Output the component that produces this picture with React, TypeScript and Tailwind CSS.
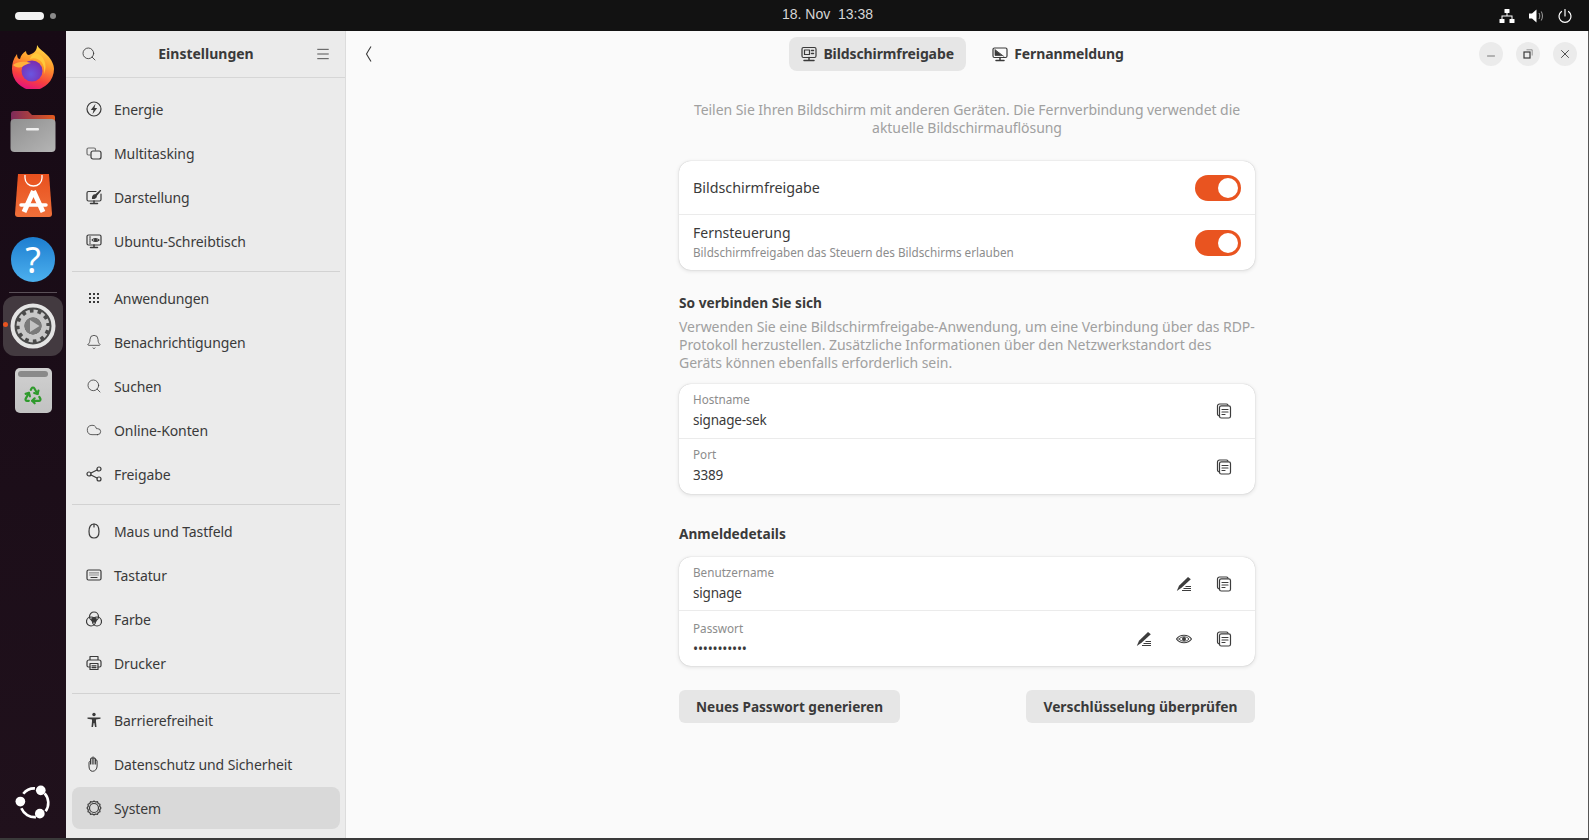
import React from 'react';
import { Search, Menu, Minus, X, Bell, Cloud, Recycle } from 'lucide-react';

const font = { fontFamily: '"Noto Sans", sans-serif' };

function Ico({ children, size = 16 }: { children: React.ReactNode; size?: number }) {
  return (
    <svg width={size} height={size} viewBox="0 0 16 16" fill="none" stroke="currentColor" strokeWidth="1.2" strokeLinecap="round" strokeLinejoin="round">
      {children}
    </svg>
  );
}

const EnergyIcon = () => (
  <Ico>
    <circle cx="8" cy="8" r="7" />
    <path d="M9.500 2.800 4.800 9H7.500L6.500 13.200 11.200 7H8.500z" fill="currentColor" stroke="none" />
  </Ico>
);
const MultitaskIcon = () => (
  <Ico>
    <path d="M4 10H2.500A1.500 1.500 0 0 1 1 8.500V4.500A1.500 1.500 0 0 1 2.500 3H8A1.500 1.500 0 0 1 9.500 4.500V5" strokeOpacity="0.7" />
    <rect x="5" y="6" width="10" height="8" rx="2" />
  </Ico>
);
const AppearanceIcon = () => (
  <Ico>
    <path d="M10 2.500H2.500A1.500 1.500 0 0 0 1 4v6.500A1.500 1.500 0 0 0 2.500 12h11a1.500 1.500 0 0 0 1.500-1.500V5" />
    <path d="M14.500 1.500 9.500 6c-1.500-.500-3 .500-3 3.500 2.500 0 4-1 3.800-2.800z" fill="currentColor" />
    <path d="M8 12v2M4.500 14.500h7" strokeWidth="1.500" />
  </Ico>
);
const DesktopIcon = () => (
  <Ico>
    <rect x="1" y="2" width="14" height="10" rx="1.500" />
    <path d="M3.500 4h1M3.500 6h1M3.500 8h1M3.500 10h1" />
    <path d="M6 7c1.500-2 5-2 7 0-2 2-5.500 2-7 0z" />
    <circle cx="9.500" cy="7" r="1" fill="currentColor" />
    <path d="M8 12v2M4.500 14.500h7" strokeWidth="1.500" />
  </Ico>
);
const AppsIcon = () => (
  <svg width="16" height="16" viewBox="0 0 16 16" fill="currentColor">
    {[3, 7, 11].flatMap((y) => [3, 7, 11].map((x) => <rect key={`${x}-${y}`} x={x} y={y} width="2" height="2" />))}
  </svg>
);
const ShareIcon = () => (
  <Ico>
    <circle cx="3" cy="8" r="2" />
    <circle cx="13" cy="3" r="2" />
    <circle cx="13" cy="13" r="2" />
    <path d="m5 7 6-3M5 9l6 3" />
  </Ico>
);
const MouseIcon = () => (
  <Ico>
    <path d="M8 1c3.500 0 5 3 5 7.500S11 15 8 15s-5-2-5-6.500S4.500 1 8 1z" />
    <path d="M8 1v3" />
  </Ico>
);
const KeyboardIcon = () => (
  <Ico>
    <rect x="1" y="3" width="14" height="10" rx="1.500" />
    <path d="M3.500 5.800h9M3.500 8h9" strokeDasharray="1 1" strokeLinecap="butt" />
    <path d="M5 10.500h6" />
  </Ico>
);
const ColorIcon = () => (
  <Ico>
    <circle cx="8" cy="5.500" r="4.500" />
    <circle cx="5" cy="10.500" r="4.500" />
    <circle cx="11" cy="10.500" r="4.500" />
    <circle cx="8" cy="8.800" r="2.300" fill="currentColor" />
  </Ico>
);
const PrinterIcon = () => (
  <Ico>
    <path d="M4 5V1.500h8V5M4 12H2.500A1.500 1.500 0 0 1 1 10.500V7a2 2 0 0 1 2-2h10a2 2 0 0 1 2 2v3.500a1.500 1.500 0 0 1-1.500 1.500H12" />
    <rect x="4" y="8.500" width="8" height="6" />
    <path d="M6 10.800h4M6 12.600h4" />
  </Ico>
);
const AccessIcon = () => (
  <svg width="16" height="16" viewBox="0 0 16 16" fill="currentColor">
    <circle cx="8" cy="2.500" r="1.700" />
    <path d="M1.500 5.500h13v1.300L10 7.500V9.500L10.500 15H9L8.300 11h-.6L7 15H5.500L6 9.500V7.500L1.500 6.800z" />
  </svg>
);
const HandIcon = () => (
  <svg width="16" height="16" viewBox="0 0 16 16" fill="none" stroke="currentColor" strokeWidth="1" strokeLinejoin="round">
    <path d="M3 6.500c0-1.300 1.500-1.300 1.500 0V3c0-1.300 1.700-1.300 1.700 0V1.800c0-1.300 1.700-1.300 1.700 0V3c0-1.300 1.700-1.300 1.700 0v2c0-1.300 1.500-1.300 1.500 0v5c0 3-2 5.300-4.500 5.300S3 13 3 10z" />
    <path d="M4.500 4v4.500M6.200 3v5.500M7.900 2.500v6M9.600 3v5.500" />
  </svg>
);
const SystemIcon = () => (
  <Ico>
    <circle cx="8" cy="8" r="4.500" />
    <path d="M8 1l1.500 1 2-.300.700 1.800 1.800.700-.300 2L15 8l-1.300 1.800.300 2-1.800.700-.700 1.800-2-.300L8 15l-1.500-1-2 .300-.700-1.800-1.800-.700.300-2L1 8l1.300-1.800-.300-2 1.800-.700.700-1.800 2 .300z" />
  </Ico>
);
const ScreenShareIcon = () => (
  <Ico>
    <rect x="1" y="1.500" width="14" height="10" rx="1.500" />
    <rect x="3.500" y="4" width="5" height="4.500" />
    <path d="M10.500 4.500h2M10.500 7.500h2" strokeWidth="1.500" />
    <path d="M8 11.500v2M3 14.500h10" strokeWidth="1.500" />
  </Ico>
);
const RemoteIcon = () => (
  <Ico>
    <rect x="1" y="2" width="14" height="9.500" rx="1.500" />
    <path d="M3 4l9 6.500M3 4v5.500h7z" fill="currentColor" strokeWidth="0.700" />
    <path d="M8 11.500v2M4 14.500h8" strokeWidth="1.500" />
  </Ico>
);
const CopyIcon = () => (
  <Ico>
    <path d="M3.500 13A2 2 0 0 1 1.500 11V3A2 2 0 0 1 3.500 1h6.500A2 2 0 0 1 12 2" />
    <rect x="3.500" y="2.800" width="11" height="12.200" rx="1.800" />
    <path d="M6 6.500h6M6 9h6M6 11.500h3" />
  </Ico>
);
const EditIcon = () => (
  <svg width="16" height="16" viewBox="0 0 16 16" fill="#3d3d3d">
    <path d="M12 1 14.800 3.200 5.500 11.800.800 15 3 9.800z" />
    <path d="M9.500 10h5.500v1.100H9.500zM7.500 12h7.500v1.100H7.500zM6 14h9v1.100H6z" />
  </svg>
);
const RevealIcon = () => (
  <Ico>
    <path d="M.500 8C4 3 12 3 15.500 8 12 13 4 13 .500 8z" />
    <path d="M3 8C5.500 5 10.500 5 13 8 10.500 11 5.500 11 3 8z" strokeWidth="0.900" />
    <circle cx="8" cy="8" r="2" fill="currentColor" stroke="none" />
  </Ico>
);

function Firefox() {
  return (
    <svg width="42" height="44" viewBox="0 0 42 44">
      <defs>
        <linearGradient id="ffa" x1="0.750" y1="0" x2="0.400" y2="1">
          <stop offset="0" stopColor="#ffe14a" />
          <stop offset="0.400" stopColor="#ff9a2b" />
          <stop offset="0.750" stopColor="#f6403f" />
          <stop offset="1" stopColor="#e5127e" />
        </linearGradient>
        <radialGradient id="ffb" cx="0.450" cy="0.650" r="0.650">
          <stop offset="0" stopColor="#6a56e0" />
          <stop offset="1" stopColor="#7a2cb0" />
        </radialGradient>
      </defs>
      <path d="M25 0C27 4 31 6 35 10 40 15 42 20 42 24A21 21 0 0 1 0 24C0 19 1 14 5 9 5 12 6 14 8 14 9 10 11 8 14 6 14 8 15 10 17 10 20 9 23 7 24 5 25 3 25 1 25 0z" fill="url(#ffa)" />
      <circle cx="20" cy="26" r="10.500" fill="url(#ffb)" />
      <path d="M1 20C6 16 13 16 19 18 15 19 12 20 10 22 6 23 3 22 1 20z" fill="#ffb13b" />
      <path d="M18 14C26 11 34 18 32 29 36 20 32 10 24 8 21 9 19 11 18 14z" fill="#ffc93b" />
    </svg>
  );
}

function Folder() {
  return (
    <svg width="46" height="42" viewBox="0 0 46 42">
      <defs>
        <linearGradient id="fo" x1="0" y1="0" x2="1" y2="0">
          <stop offset="0" stopColor="#7d2a5a" />
          <stop offset="1" stopColor="#e35a1e" />
        </linearGradient>
        <linearGradient id="fg" x1="0" y1="0" x2="1" y2="1">
          <stop offset="0" stopColor="#8f8f8f" />
          <stop offset="1" stopColor="#b5b5b5" />
        </linearGradient>
      </defs>
      <path d="M1 3a3 3 0 0 1 3-3h14l4 4h21a2 2 0 0 1 2 2v14H1z" fill="url(#fo)" />
      <rect x="0.500" y="8" width="45" height="33" rx="4" fill="url(#fg)" />
      <rect x="16" y="17" width="13" height="2.500" rx="1" fill="#efefef" />
    </svg>
  );
}

function AppCenter() {
  return (
    <svg width="37" height="43" viewBox="0 0 37 43">
      <defs>
        <linearGradient id="ac" x1="0" y1="0" x2="0" y2="1">
          <stop offset="0" stopColor="#e8501e" />
          <stop offset="1" stopColor="#f0703a" />
        </linearGradient>
      </defs>
      <path d="M3 0h31l3 40a3 3 0 0 1-3 3H3a3 3 0 0 1-3-3z" fill="url(#ac)" />
      <path d="M10 1v3a8.500 8 0 0 0 17 0V1" fill="none" stroke="#fff" strokeWidth="1.300" />
      <path d="M18.500 17 9 38M18.500 17 28 38" stroke="#fff" strokeWidth="5" fill="none" />
      <path d="M6 31h25" stroke="#fff" strokeWidth="3.500" strokeLinecap="round" />
    </svg>
  );
}

function HelpIcon() {
  return (
    <div className="w-[44px] h-[45px] rounded-full bg-gradient-to-b from-[#1c7ed0] to-[#4cb0ee] flex items-center justify-center text-white text-[36px] leading-none" style={font}>
      ?
    </div>
  );
}

function SettingsIcon() {
  return (
    <svg width="46" height="46" viewBox="0 0 46 46">
      <circle cx="23" cy="23" r="20.500" fill="#4a4a4a" stroke="#e4e4e4" strokeWidth="4" />
      <g fill="none" stroke="#c8c8c8">
        <circle cx="23" cy="23" r="11" strokeWidth="5" />
        <circle cx="23" cy="23" r="14.500" strokeWidth="4" strokeDasharray="4 3.600" />
      </g>
      <circle cx="23" cy="23" r="8.500" fill="#7a7a7a" />
      <path d="M20 17v12l9.500-6z" fill="#c4c4c4" />
    </svg>
  );
}

function TrashIcon() {
  return (
    <div className="w-[37px] h-[45px] rounded-[5px] bg-gradient-to-b from-[#d0d0d0] to-[#c2c2c2] flex flex-col items-center pt-[3px]">
      <div className="w-[30px] h-[6px] rounded-sm bg-[#8a8a8a]" />
      <Recycle className="mt-[8px]" size={20} color="#2f9a2c" strokeWidth={2.6} />
    </div>
  );
}

function UbuntuLogo() {
  return (
    <svg width="36" height="35" viewBox="0 0 36 36">
      <g fill="none" stroke="#fff" strokeWidth="2.700">
        <path d="M8 9A14.500 14.500 0 0 1 20 3.500" />
        <path d="M30 8.500A15 15 0 0 1 31 27" />
        <path d="M6 24A15 15 0 0 0 21 33" />
      </g>
      <circle cx="26" cy="5.500" r="5" fill="#fff" />
      <circle cx="5" cy="17" r="5" fill="#fff" />
      <circle cx="25" cy="29.500" r="5" fill="#fff" />
    </svg>
  );
}

function NavRow({ icon, label, active }: { icon: React.ReactNode; label: string; active?: boolean }) {
  return (
    <div className={`h-[42px] mb-[2px] flex items-center rounded-lg pl-[14px] text-[#3a3a3a] ${active ? 'bg-[#d9d9d9]' : ''}`}>
      <span className="w-[28px] flex items-center">{icon}</span>
      <span className="text-[14px] tracking-[-0.1px]">{label}</span>
    </div>
  );
}

function Separator() {
  return <div className="h-px bg-[#d2d2d2] mt-[9px] mb-[5px]" />;
}

function Toggle() {
  return (
    <div className="w-[46px] h-[26px] rounded-full bg-[#e95420] flex items-center justify-end pr-[3px]">
      <div className="w-[20px] h-[20px] rounded-full bg-white" />
    </div>
  );
}

function Card({ children }: { children: React.ReactNode }) {
  return <div className="bg-white rounded-xl shadow-[0_0_1px_rgba(0,0,0,0.25),0_1px_4px_rgba(0,0,0,0.12)] divide-y divide-[#ebebeb]">{children}</div>;
}

function InfoRow({ label, value, first, textClass = '', children }: { label: string; value: string; first?: boolean; textClass?: string; children: React.ReactNode }) {
  return (
    <div className={`${first ? 'h-[54px]' : 'h-[55px]'} flex items-center pl-[14px] pr-[23px]`}>
      <div className={`flex-1 ${textClass}`}>
        <div className="text-[11.7px] leading-[16px] text-[#8c8c8c]">{label}</div>
        <div className="text-[13.5px] tracking-[-0.2px] leading-[20px] text-[#3a3a3a] mt-[3px]">{value}</div>
      </div>
      <div className="flex items-center gap-[24px] text-[#3d3d3d]">{children}</div>
    </div>
  );
}

export default function App() {
  return (
    <div className="w-[1589px] h-[840px] overflow-hidden flex flex-col bg-[#1c0f19]" style={font}>
      <div className="h-[31px] shrink-0 bg-[#121212] flex items-center justify-between pl-[15px] pr-[16px] relative">
        <div className="flex items-center gap-[6px]">
          <div className="w-[29px] h-[8px] rounded-full bg-[#f2f2f2]" />
          <div className="w-[6px] h-[6px] rounded-full bg-[#8a8a8a]" />
        </div>
        <div className="absolute left-[782px] top-[4px] text-[14px] leading-[20px] text-[#d6d6d6] whitespace-pre" style={{ fontFamily: '"Liberation Sans", sans-serif' }}>
          18. Nov  13:38
        </div>
        <div className="flex items-center gap-[13px] text-white">
          <svg width="16" height="16" viewBox="0 0 16 16" fill="currentColor">
            <rect x="5.500" y="1" width="5" height="4" rx="0.500" />
            <rect x="0.500" y="11" width="5" height="4" rx="0.500" />
            <rect x="10.500" y="11" width="5" height="4" rx="0.500" />
            <path d="M7.500 5h1v2.500H13.500V11h-1V8.500h-9V11h-1V7.500H7.500z" />
          </svg>
          <svg width="16" height="16" viewBox="0 0 16 16" fill="currentColor">
            <path d="M1 5.500h3L8.500 1.500v13L4 10.500H1z" />
            <path d="M11 5c1 2 1 4 0 6M13.300 3.500c1.500 3 1.500 6 0 9" fill="none" stroke="currentColor" strokeWidth="1" opacity="0.6" />
          </svg>
          <svg width="16" height="16" viewBox="0 0 16 16" fill="none" stroke="currentColor" strokeWidth="1.200" strokeLinecap="round">
            <path d="M8 1.500V8" />
            <path d="M4.500 3.500a6 6 0 1 0 7 0" />
          </svg>
        </div>
      </div>
      <div className="flex flex-1 min-h-0">
        <div className="w-[66px] shrink-0 bg-gradient-to-b from-[#170a15] to-[#20111c] flex flex-col items-center pt-[14px] pb-[18px]">
          <Firefox />
          <div className="mt-[22px]"><Folder /></div>
          <div className="mt-[21px]"><AppCenter /></div>
          <div className="mt-[20px]"><HelpIcon /></div>
          <div className="mt-[10px] w-[48px] h-px bg-[#5a5058]" />
          <div className="mt-[3px] w-[60px] h-[60px] rounded-[12px] bg-[#433a40] flex items-center justify-center relative">
            <span className="absolute left-0 top-[26px] w-[5px] h-[5px] rounded-full bg-[#e95420]" />
            <SettingsIcon />
          </div>
          <div className="mt-[12px]"><TrashIcon /></div>
          <div className="mt-auto"><UbuntuLogo /></div>
        </div>
        <div className="w-[280px] shrink-0 bg-[#ebebeb] border-r border-[#dcdcdc] flex flex-col">
          <div className="h-[47px] shrink-0 border-b border-[#d6d6d6] flex items-center justify-between pl-[15px] pr-[14px] text-[#3a3a3a]">
            <Search size={16} strokeWidth={1.3} />
            <span className="text-[14px] font-bold mt-[-2px]">Einstellungen</span>
            <Menu size={16} strokeWidth={1.3} />
          </div>
          <div className="pl-[6px] pr-[5px] pt-[10px]">
            <NavRow icon={<EnergyIcon />} label="Energie" />
            <NavRow icon={<MultitaskIcon />} label="Multitasking" />
            <NavRow icon={<AppearanceIcon />} label="Darstellung" />
            <NavRow icon={<DesktopIcon />} label="Ubuntu-Schreibtisch" />
            <Separator />
            <NavRow icon={<AppsIcon />} label="Anwendungen" />
            <NavRow icon={<Bell size={16} strokeWidth={1.2} />} label="Benachrichtigungen" />
            <NavRow icon={<Search size={16} strokeWidth={1.2} />} label="Suchen" />
            <NavRow icon={<Cloud size={16} strokeWidth={1.2} />} label="Online-Konten" />
            <NavRow icon={<ShareIcon />} label="Freigabe" />
            <Separator />
            <NavRow icon={<MouseIcon />} label="Maus und Tastfeld" />
            <NavRow icon={<KeyboardIcon />} label="Tastatur" />
            <NavRow icon={<ColorIcon />} label="Farbe" />
            <NavRow icon={<PrinterIcon />} label="Drucker" />
            <Separator />
            <NavRow icon={<AccessIcon />} label="Barrierefreiheit" />
            <NavRow icon={<HandIcon />} label="Datenschutz und Sicherheit" />
            <NavRow icon={<SystemIcon />} label="System" active />
          </div>
        </div>
        <div className="flex-1 bg-[#fafafa] border-r border-[#555555] flex flex-col items-center relative">
          <div className="absolute left-[14px] top-[15px] text-[#3a3a3a]">
            <svg width="16" height="16" viewBox="0 0 16 16" fill="none" stroke="currentColor" strokeWidth="1.100">
              <path d="M11 0.500Q8.500 4.500 6.500 8 8.500 11.500 11 15.500" />
            </svg>
          </div>
          <div className="absolute right-[11px] top-[11px] flex gap-[13px] text-[#3a3a3a]">
            <div className="w-[24px] h-[24px] rounded-full bg-[#ebebeb] flex items-center justify-center"><Minus size={12} strokeWidth={1.3} className="mt-[4px]" /></div>
            <div className="w-[24px] h-[24px] rounded-full bg-[#ebebeb] flex items-center justify-center">
              <svg width="10" height="10" viewBox="0 0 10 10" fill="none" stroke="currentColor">
                <rect x="1" y="3" width="6" height="6" strokeWidth="1.200" />
                <path d="M3.500 .800H9.200V6.500" strokeOpacity="0.6" strokeWidth="0.800" />
              </svg>
            </div>
            <div className="w-[24px] h-[24px] rounded-full bg-[#ebebeb] flex items-center justify-center"><X size={14} strokeWidth={1.5} /></div>
          </div>
          <div className="h-[46px] shrink-0 flex items-center gap-[17px] text-[#3a3a3a] mr-[12px]">
            <div className="h-[34px] w-[177px] rounded-lg bg-[#e6e6e6] flex items-center justify-center gap-[6px]">
              <ScreenShareIcon />
              <span className="text-[14px] font-bold tracking-[-0.1px] mt-[-2px]">Bildschirmfreigabe</span>
            </div>
            <div className="h-[34px] px-[9px] flex items-center gap-[6px]">
              <RemoteIcon />
              <span className="text-[14px] font-bold tracking-[-0.1px] mt-[-2px]">Fernanmeldung</span>
            </div>
          </div>
          <div className="w-[576px] mt-[24px]">
            <p className="text-[14px] tracking-[-0.05px] leading-[18px] text-center text-[#a0a0a0] whitespace-nowrap">
              Teilen Sie Ihren Bildschirm mit anderen Geräten. Die Fernverbindung verwendet die<br />aktuelle Bildschirmauflösung
            </p>
            <div className="mt-[24px]">
              <Card>
                <div className="h-[54px] flex items-center justify-between pl-[14px] pr-[14px]">
                  <span className="text-[14.3px] text-[#3a3a3a]">Bildschirmfreigabe</span>
                  <Toggle />
                </div>
                <div className="h-[55px] flex items-center justify-between pl-[14px] pr-[14px]">
                  <div className="pb-[1px]">
                    <div className="text-[14px] leading-[20px] text-[#3a3a3a] mt-[-2px]">Fernsteuerung</div>
                    <div className="text-[11.7px] leading-[16px] text-[#8c8c8c] mt-[1px]">Bildschirmfreigaben das Steuern des Bildschirms erlauben</div>
                  </div>
                  <Toggle />
                </div>
              </Card>
            </div>
            <h2 className="mt-[23px] text-[13.7px] leading-[20px] font-bold text-[#3a3a3a]">So verbinden Sie sich</h2>
            <p className="mt-[5px] text-[14px] tracking-[-0.05px] leading-[18px] text-[#a0a0a0] whitespace-nowrap">
              Verwenden Sie eine Bildschirmfreigabe-Anwendung, um eine Verbindung über das RDP-<br />Protokoll herzustellen. Zusätzliche Informationen über den Netzwerkstandort des<br />Geräts können ebenfalls erforderlich sein.
            </p>
            <div className="mt-[12px]">
              <Card>
                <InfoRow label="Hostname" value="signage-sek" textClass="pb-[2px]"><CopyIcon /></InfoRow>
                <InfoRow label="Port" value="3389" textClass="pb-[2px]"><CopyIcon /></InfoRow>
              </Card>
            </div>
            <h2 className="mt-[30px] text-[13.7px] leading-[20px] font-bold text-[#3a3a3a]">Anmeldedetails</h2>
            <div className="mt-[13px]">
              <Card>
                <InfoRow first label="Benutzername" value="signage"><EditIcon /><CopyIcon /></InfoRow>
                <InfoRow label="Passwort" value="•••••••••••" textClass="pt-[2px]"><EditIcon /><RevealIcon /><CopyIcon /></InfoRow>
              </Card>
            </div>
            <div className="mt-[24px] flex justify-between">
              <div className="h-[33px] w-[221px] rounded-md bg-[#e6e6e6] flex items-center justify-center pt-[2px] text-[13.6px] font-bold text-[#3a3a3a]">Neues Passwort generieren</div>
              <div className="h-[33px] w-[229px] rounded-md bg-[#e6e6e6] flex items-center justify-center pt-[2px] text-[13.8px] font-bold text-[#3a3a3a]">Verschlüsselung überprüfen</div>
            </div>
          </div>
        </div>
      </div>
      <div className="h-[2px] shrink-0 bg-[#3a3a3a]" />
    </div>
  );
}
